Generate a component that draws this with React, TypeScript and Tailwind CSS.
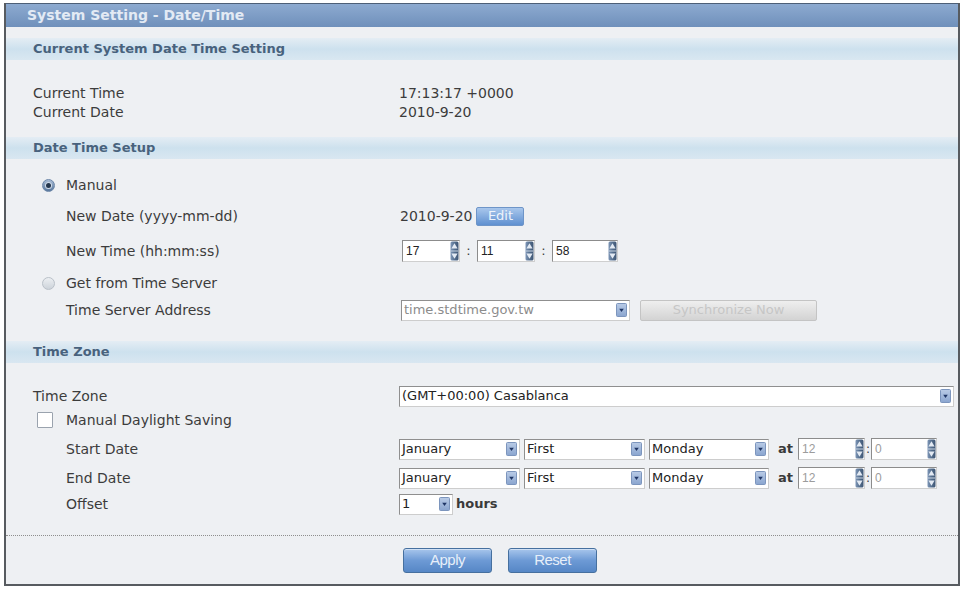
import React from 'react';

const base = "font-['DejaVu_Sans',sans-serif]";

function SpinArrows() {
  return (
    <svg width="9" height="20" viewBox="0 0 9 20">
      <defs>
        <linearGradient id="spinbg" x1="0" y1="0" x2="1" y2="0">
          <stop offset="0" stopColor="#7f97b8" />
          <stop offset="0.5" stopColor="#56708f" />
          <stop offset="1" stopColor="#3f5674" />
        </linearGradient>
      </defs>
      <rect x="0.5" y="0.5" width="8" height="19" rx="1.5" fill="url(#spinbg)" />
      <rect x="1" y="9.5" width="7" height="1" fill="#c7d3e2" />
      <path d="M4.5 2.2 L7.6 7.4 H1.4 Z" fill="#e3eaf3" />
      <path d="M4.5 17.8 L7.6 12.6 H1.4 Z" fill="#e3eaf3" />
    </svg>
  );
}

function DropArrow() {
  return (
    <svg width="11" height="14" viewBox="0 0 11 14">
      <defs>
        <linearGradient id="dropbg" x1="0" y1="0" x2="0" y2="1">
          <stop offset="0" stopColor="#b9cbe6" />
          <stop offset="1" stopColor="#8aa5cf" />
        </linearGradient>
      </defs>
      <rect x="0.5" y="0.5" width="10" height="13" rx="1" fill="url(#dropbg)" stroke="#7c95bd" />
      <path d="M3.2 5.8 H7.8 L5.5 9 Z" fill="#1f3565" />
    </svg>
  );
}

function SpinBox({ value, width, muted }: { value: string; width: string; muted?: boolean }) {
  return (
    <div
      className={`relative flex h-[22px] items-center border border-[#cfcfcf] border-t-[#8c8c8c] border-l-[#8c8c8c] bg-white ${width}`}
    >
      <span
        className={`pl-[3px] font-['Liberation_Sans',sans-serif] text-[12px] ${muted ? 'text-[#9c9c9c]' : 'text-[#222]'}`}
      >
        {value}
      </span>
      <span className="absolute right-[0px] top-[0px] flex">
        <SpinArrows />
      </span>
    </div>
  );
}

function Select({ value, width, muted }: { value: string; width: string; muted?: boolean }) {
  return (
    <div
      className={`relative flex h-[21px] items-center border border-[#cdcdcd] border-t-[#8f8f8f] border-l-[#8f8f8f] bg-white ${width}`}
    >
      <span className={`pl-[2px] text-[13px] ${muted ? 'text-[#8c8c8c]' : 'text-[#222]'}`}>{value}</span>
      <span className="absolute right-[2px] top-[2px] flex">
        <DropArrow />
      </span>
    </div>
  );
}

function SectionHeader({ title }: { title: string }) {
  return (
    <div className="flex h-[22px] items-center bg-gradient-to-b from-[#e4edf4] via-[#cde1ee] to-[#d9e7f1] pl-[27px]">
      <span className="text-[13px] font-bold text-[#48627d]">{title}</span>
    </div>
  );
}

function Radio({ checked }: { checked?: boolean }) {
  return checked ? (
    <span className="flex h-[13px] w-[13px] items-center justify-center rounded-full border border-[#6b86a8] bg-gradient-to-b from-[#a9bdd6] to-[#58779d]">
      <span className="h-[5px] w-[5px] rounded-full bg-[#23364d] ring-1 ring-[#cfdae8]" />
    </span>
  ) : (
    <span className="h-[13px] w-[13px] rounded-full border border-[#b9c0c8] bg-gradient-to-b from-[#eceff2] to-[#cdd3da]" />
  );
}

function BlueButton({ label }: { label: string }) {
  return (
    <div className="flex h-[25px] w-[89px] items-center justify-center rounded-[3px] border border-[#46709f] bg-gradient-to-b from-[#a8c6ec] via-[#6d9ad5] to-[#5687c6] shadow-[inset_0_1px_0_#cfe0f5]">
      <span className="font-['Liberation_Sans',sans-serif] text-[15px] tracking-[-0.5px] text-[#e7eff9]">{label}</span>
    </div>
  );
}

export default function App() {
  return (
    <div className={`h-[589px] w-[965px] bg-white pt-[3px] pl-[4px] text-[#3c3c3c] ${base}`}>
      <div className="w-[956px] border-x-2 border-b-2 border-[#575b60] bg-[#eef0f3]">
        <div className="flex h-[24px] items-center border-t border-[#4d5f77] bg-gradient-to-b from-[#8daad0] to-[#6f90bb] pl-[21px]">
          <span className="text-[14px] font-bold text-[#e3eaf4]">System Setting - Date/Time</span>
        </div>

        <div className="mt-[11px]">
          <SectionHeader title="Current System Date Time Setting" />
        </div>
        <div className="mt-[24px] pl-[27px] text-[14px]">
          <div className="flex h-[19px] items-center">
            <span className="w-[366px]">Current Time</span>
            <span>17:13:17 +0000</span>
          </div>
          <div className="flex h-[19px] items-center">
            <span className="w-[366px]">Current Date</span>
            <span>2010-9-20</span>
          </div>
        </div>

        <div className="mt-[15px]">
          <SectionHeader title="Date Time Setup" />
        </div>
        <div className="mt-[14px] text-[14px]">
          <div className="flex h-[24px] items-center pl-[36px]">
            <Radio checked />
            <span className="ml-[11px]">Manual</span>
          </div>
          <div className="flex h-[38px] items-center pl-[60px]">
            <span className="w-[334px]">New Date (yyyy-mm-dd)</span>
            <span>2010-9-20</span>
            <div className="ml-[4px] flex h-[19px] w-[48px] items-center justify-center rounded-[2px] border border-[#6e95c8] bg-gradient-to-b from-[#a9c7ec] to-[#5f90d0]">
              <span className="text-[13px] text-[#eef4fb]">Edit</span>
            </div>
          </div>
          <div className="flex h-[32px] items-center pl-[60px]">
            <span className="w-[336px]">New Time (hh:mm:ss)</span>
            <SpinBox value="17" width="w-[58px]" />
            <span className="w-[17px] text-center text-[13px]">:</span>
            <SpinBox value="11" width="w-[58px]" />
            <span className="w-[17px] text-center text-[13px]">:</span>
            <SpinBox value="58" width="w-[66px]" />
          </div>
          <div className="flex h-[32px] items-center pl-[36px]">
            <Radio />
            <span className="ml-[11px]">Get from Time Server</span>
          </div>
          <div className="flex h-[22px] items-center pl-[60px]">
            <span className="w-[335px]">Time Server Address</span>
            <Select value="time.stdtime.gov.tw" width="w-[229px]" muted />
            <div className="ml-[10px] flex h-[21px] w-[177px] items-center justify-center rounded-[2px] border border-[#c4c4c4] bg-gradient-to-b from-[#efefef] to-[#d3d3d3]">
              <span className="text-[13px] text-[#c6c6c6]">Synchronize Now</span>
            </div>
          </div>
        </div>

        <div className="mt-[20px]">
          <SectionHeader title="Time Zone" />
        </div>
        <div className="mt-[22px] text-[14px]">
          <div className="flex h-[22px] items-center pl-[27px]">
            <span className="w-[366px]">Time Zone</span>
            <Select value="(GMT+00:00) Casablanca" width="w-[555px]" />
          </div>
          <div className="flex h-[26px] items-center pl-[31px]">
            <span className="h-[16px] w-[16px] rounded-[1px] border border-[#9aa3ae] bg-white" />
            <span className="ml-[13px]">Manual Daylight Saving</span>
          </div>
          {['Start Date', 'End Date'].map((label, i) => (
            <div key={label} className={`flex items-center pl-[60px] ${i === 0 ? 'h-[32px]' : 'h-[26px]'}`}>
              <span className="w-[333px]">{label}</span>
              <Select value="January" width="w-[121px]" />
              <div className="ml-[4px]">
                <Select value="First" width="w-[121px]" />
              </div>
              <div className="ml-[4px]">
                <Select value="Monday" width="w-[120px]" />
              </div>
              <span className="ml-[9px] text-[13px] font-bold text-[#3a3a3a]">at</span>
              <div className="ml-[5px]">
                <SpinBox value="12" width="w-[67px]" muted />
              </div>
              <span className="w-[6px] text-center text-[12px]">:</span>
              <SpinBox value="0" width="w-[66px]" muted />
            </div>
          ))}
          <div className="flex h-[26px] items-center pl-[60px]">
            <span className="w-[333px]">Offset</span>
            <Select value="1" width="w-[54px]" />
            <span className="ml-[3px] text-[13px] font-bold text-[#3a3a3a]">hours</span>
          </div>
        </div>

        <div className="mt-[18px] border-t border-dotted border-[#8e8e8e]" />
        <div className="mt-[12px] flex h-[25px] justify-center gap-[16px] pl-[36px]">
          <BlueButton label="Apply" />
          <BlueButton label="Reset" />
        </div>
        <div className="h-[11px]" />
      </div>
    </div>
  );
}
